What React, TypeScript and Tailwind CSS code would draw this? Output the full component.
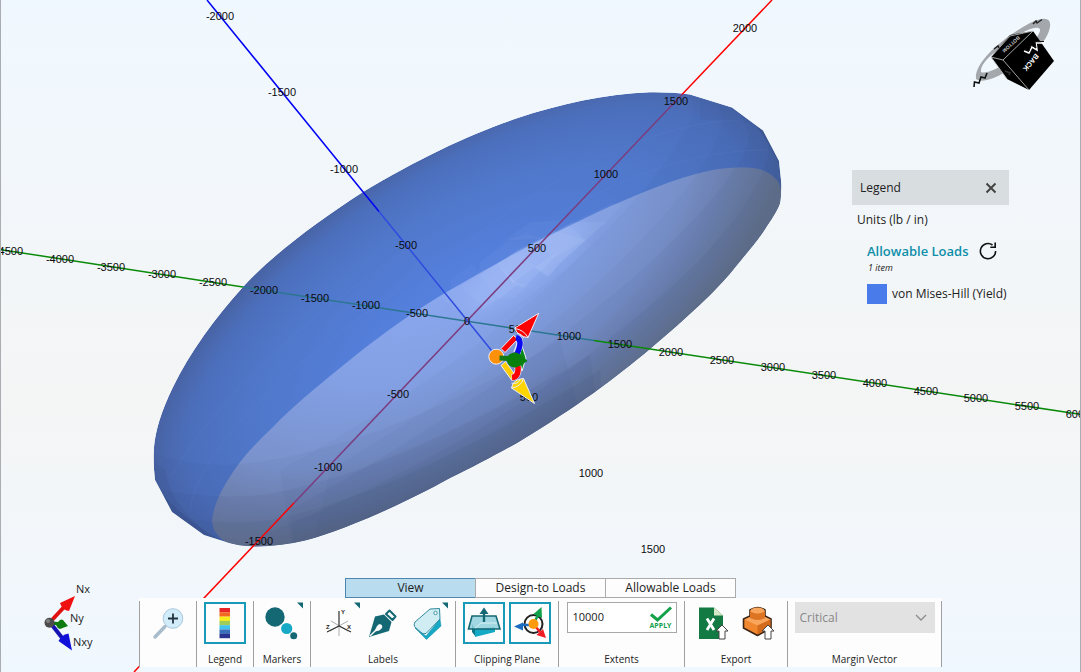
import React, { useState } from "react";

type Point = [number, number];

type Axis = {
  id: string;
  step: Point;
  from: number;
  to: number;
};

const ORIGIN: Point = [467.4, 320.8];

// screen distance covered by 500 units on each axis
const AXES: Axis[] = [
  { id: "nx", step: [69.5, -73.3], from: -3, to: 4 },
  { id: "ny", step: [50.9, 7.75], from: -9, to: 12 },
  { id: "nxy", step: [61.8, 76.15], from: -4, to: 3 },
];

const OUTLINE =
  "M154 447 Q153 464 155 480 L172 512 L204 535 L226 542 Q238 546 256 546.500 Q282 546 305 540.500 C345 530 405 503 450 478 C475 466 495 455 517 443 C580 405 615 378 650 349 C690 315 715 292 733 270 C750 249 760 238 767 226 Q778 210 780 203 Q782 190 781 180 L779 161 L763 130.500 L732 107.500 L690 94.500 Q672 92 650 92.300 C605 94 560 104 517 118.300 C470 134 420 158 363 192 C315 223 270 257 243 287 C215 318 190 352 173 387 Q156 422 154 447 Z";

const SECTION =
  "M781 206 Q783 185 776 179 C766 169 754 167 743 167.500 C722 167 705 171 683 177.700 C645 190 605 208 567 227 C527 246 488 268 450 290 C410 313 370 343 340 368 C315 388 290 409 273 427 C255 444 243 457 233 472 Q213 501 212 522 Q213 534 226 542 L260 560 L800 560 L800 206 Z";

const COLOR_SCALE = ["#e8262a", "#f26a21", "#f7ec1c", "#9fcb5a", "#3fc3ee", "#3a6fb9", "#28348f"];

const FACETS = [
  ["M452 289 L460 286 L482 308 L468 318 L440 297Z", 0.08],
  ["M460 286 L479 275 L500 298 L483 309Z", 0.12],
  ["M479 275 L497 264 L518 284 L500 299Z", 0.18],
  ["M497 264 L518 250 L535 267 L513 283Z", 0.24],
  ["M513 283 L535 267 L560 250 L546 266 L523 288Z", 0.15],
  ["M518 250 L555 231 L586 240 L560 263 L548 277 L535 267Z", 0.2],
  ["M540 240 L568 226 L586 240 L552 259Z", 0.1],
  ["M555 231 L573 222 L606 222 L586 240Z", 0.13],
  ["M573 222 L612 203 L622 205 L606 222Z", 0.05],
  ["M500 299 L518 284 L530 284 L514 298Z", 0.08],
  ["M480 262 L510 239 L528 234 L541 238 L500 262 L478 274Z", 0.05],
  ["M505 240 L530 222 L565 220 L554 231 L540 239Z", 0.05],
  ["M452 278 L472 264 L480 273 L450 290Z", 0.04],
] as const;

const Ticks = () => (
  <g fill="#0b0b10" fontSize="11" textAnchor="middle" fontFamily="'Liberation Sans', Arial, sans-serif">
    {AXES.map((axis) =>
      Array.from({ length: axis.to - axis.from + 1 }, (_, i) => axis.from + i)
        .filter((n) => n !== 0 || axis.id === "nx")
        .map((n) => (
          <text
            key={axis.id + n}
            x={Math.round(ORIGIN[0] + n * axis.step[0])}
            y={Math.round(ORIGIN[1] + n * axis.step[1]) + 4}
          >
            {n * 500}
          </text>
        ))
    )}
  </g>
);

const Gizmo = () => (
  <g stroke="#e9eefb" strokeWidth="1" strokeLinejoin="round">
    <path d="M522 346 L526 358 L522 371 L518 360Z" fill="#0a8a1c" />
    <path d="M501 348.500 L513.500 335.500 L518 339 L505 352.500Z" fill="#f00" />
    <path d="M514.700 328 L538.700 313.300 L528 337.500 Q518 337 514.700 328Z" fill="#f00" />
    <path d="M515 328.500 Q524 330 528 337.500 M517 333 Q522 334 524 338" fill="none" />
    <path d="M516.500 338.500 Q523 339 516.500 353" fill="none" strokeWidth="7" />
    <path d="M516 337.500 Q523.500 339 517 354" fill="none" stroke="#0a0af0" strokeWidth="5.500" />
    <path d="M501 365.500 L505.500 361.500 L516 376 L511.500 380Z" fill="#fc0" />
    <path d="M518 366 Q519 377 511.500 377.500" fill="none" strokeWidth="7" />
    <path d="M518 366 Q519 377 512 377.500" fill="none" stroke="#f00" strokeWidth="5.500" />
    <path d="M511.500 388 Q513 379 523.500 378.500 L534.500 403.500Z" fill="#ffd500" />
    <path d="M511.500 388 Q521 387 523.500 378.500 M511.500 383 Q518 385 520 379" fill="none" />
    <circle cx="496.300" cy="356.700" r="7.500" fill="#ff900a" />
    <path d="M499.500 355.500 L509 356 L509 361 L499.500 360.500Z" fill="#127a14" stroke="none" />
    <path d="M516 352.500 Q521 354 527.500 361 Q520 366 516 367.500 Q507 367 507 360 Q507 353 516 352.500Z" fill="#0a800c" stroke="none" />
  </g>
);

const Scene = () => (
  <svg
    className="absolute inset-0 h-full w-full"
    viewBox="1 0 1079 672"
    preserveAspectRatio="xMidYMid slice"
    role="img"
    aria-label="Failure envelope"
  >
    <defs>
      <radialGradient id="shell" gradientUnits="userSpaceOnUse" cx="0" cy="0" r="1" gradientTransform="translate(467 320) rotate(-32.7) scale(360 168)">
        <stop offset="0" stopColor="#5683e2" />
        <stop offset="0.3" stopColor="#547fdb" />
        <stop offset="0.65" stopColor="#5078cb" />
        <stop offset="0.88" stopColor="#4c6fbc" />
        <stop offset="1" stopColor="#4863a4" />
      </radialGradient>
      <radialGradient id="section" gradientUnits="userSpaceOnUse" cx="0" cy="0" r="1" gradientTransform="translate(447 276) rotate(-34) scale(400 190)">
        <stop offset="0" stopColor="#8ca8f0" />
        <stop offset="0.4" stopColor="#83a0e4" />
        <stop offset="0.7" stopColor="#7a92cc" />
        <stop offset="0.9" stopColor="#6c7ca4" />
        <stop offset="1" stopColor="#68758f" />
      </radialGradient>
      <clipPath id="body">
        <path d={OUTLINE} />
      </clipPath>
      <clipPath id="front">
        <path d={SECTION} />
      </clipPath>
      <filter id="soft">
        <feGaussianBlur stdDeviation="9" />
      </filter>
    </defs>

    <g clipPath="url(#body)">
      <path d={OUTLINE} fill="url(#shell)" />
      <path d={SECTION} fill="url(#section)" />
      {/* glow behind the section plane */}
      <g clipPath="url(#front)">
        <ellipse cx="522" cy="268" rx="75" ry="22" fill="#a5c0ff" opacity="0.35" filter="url(#soft)" transform="rotate(-36 522 268)" />
      </g>
      {FACETS.map(([d, opacity]) => (
        <path key={d} d={d} fill="#c3d5ff" opacity={opacity} />
      ))}
      {/* darker bands towards both tips */}
      <g fill="#26355e">
        <path d="M680 85 Q700 105 690 122 C670 165 620 220 555 280 C500 330 410 400 280 470 L300 600 L800 600 L800 80Z" opacity="0.03" />
        <path d="M706 90 Q727 112 720 130 C712 165 655 230 590 290 C530 345 430 410 330 470 L300 600 L800 600 L800 80Z" opacity="0.03" />
        <path d="M728 100 Q752 125 748 143 C735 185 655 262 600 305 C520 368 420 440 290 510 L300 600 L800 600 L800 80Z" opacity="0.04" />
        <path d="M750 108 Q773 140 768 158 C750 215 690 275 620 330 C540 395 420 475 260 535 L300 600 L800 600 L800 80Z" opacity="0.05" />
        <path d="M700 120 Q750 118 790 135 L790 80 L732 90 L700 95Z" opacity="0.04" />
        <path d="M715 98 Q755 112 790 165 L790 80 L732 90Z" opacity="0.14" />
        <path d="M732 100 Q765 130 782 170 L790 80Z" opacity="0.2" />
        <path d="M140 448 Q195 472 260 462 Q400 440 560 340 L620 560 L140 560Z" opacity="0.04" />
        <path d="M140 485 Q210 502 270 494 Q400 470 590 355 L620 560 L140 560Z" opacity="0.06" />
        <path d="M140 508 Q210 528 270 520 Q400 495 600 370 L620 560 L140 560Z" opacity="0.06" />
        <path d="M165 470 Q172 520 250 560 L140 560 L140 450Z" opacity="0.08" />
        <path d="M150 480 Q185 525 240 550 L140 560Z" opacity="0.14" />
      </g>
      <g fill="none" stroke="#8fb0ff" strokeOpacity="0.08">
        <path d="M170 478 C215 400 310 310 430 235" />
        <path d="M190 510 C200 440 310 350 400 290" />
        <path d="M500 250 C570 205 660 150 768 150" />
        <path d="M470 240 C560 170 660 120 745 120" />
      </g>
    </g>

    <g fill="none" strokeWidth="1.500">
      <path d="M0 249.500 L243 287" stroke="#098a09" />
      <path d="M243 287 L594 340.500" stroke="#2b7690" />
      <path d="M594 340.500 L1081 414.500" stroke="#098a09" />
      <path d="M772 0 L682 94.500" stroke="#f00" />
      <path d="M682 94.500 L294 503" stroke="#7b3c7e" />
      <path d="M294 503 L134 672" stroke="#f00" />
      <path d="M207 0 L379 211.500" stroke="#0000f5" />
      <path d="M379 211.500 L496 356" stroke="#2f4be0" />
    </g>
    <Ticks />
    <Gizmo />
  </svg>
);

const ViewCube = () => (
  <svg className="h-20 w-22" viewBox="970 14 88 80" role="img" aria-label="View cube">
    <path
      fillRule="evenodd"
      fill="#a4a8ac"
      d="M976 79 C974 62 1004 37 1030 23 Q1052 13 1050 27 C1048 38 1040 47 1030 53 C1012 70 986 86 976 79Z M981 72 C985 75 1005 66 1018 55 C1032 45 1041 34 1040 29 C1034 23 1010 39 995 52 Q980 64 981 72Z"
    />
    <path d="M991 57 L1010 35 L1033 31 L1054 61 L1029 90 L1007 79Z" fill="#000" />
    <path d="M1007 79 L991 57 L1010 36 L1033 31 M991 57 L1003 60 L1033 31 M1003 60 L1029 90" fill="none" stroke="#c9c9c9" strokeWidth="0.800" />
    <g fontWeight="700" textAnchor="middle" fontFamily="'Liberation Sans', sans-serif">
      <text transform="translate(1010 43) rotate(138)" fontSize="5" fill="#c4c4c4">
        BOTTOM
      </text>
      <text transform="translate(1029 61) rotate(130)" fontSize="7" fill="#fff">
        BACK
      </text>
    </g>
    <path d="M1024 51 L1029 53 L1032 47 L1037 50 L1036 43 L1044 43" fill="none" stroke="#fff" strokeWidth="1.600" />
    <path d="M1025 49.500 L1029 51 L1031 45 L1036 48 L1035 41.500 L1044 41.500" fill="none" stroke="#111" strokeWidth="1" />
    <path d="M974 87 L974.500 82 L979 83 L981 77 L985 78 L987 73" fill="none" stroke="#111" strokeWidth="1.600" />
    <path d="M1033 24 L1036 21 L1037 23 L1042 19.500" fill="none" stroke="#222" strokeWidth="1.500" />
    <path d="M994 49 L998 46 L999 48" fill="none" stroke="#222" strokeWidth="1.500" />
    <path d="M1005 71 L1010 73 L1009 75" fill="none" stroke="#333" strokeWidth="1.500" />
  </svg>
);

const Triad = () => (
  <svg className="absolute bottom-4 left-10 h-20 w-16" viewBox="41 576 64 80" role="img" aria-label="Axis directions">
    <g strokeWidth="4">
      <path d="M52 620 L65 606" stroke="#e01010" />
      <path d="M52 625 L63 639" stroke="#1414b4" />
    </g>
    <path d="M60 603 L75 596 L69 611Q62 610 60 603Z" fill="#f01010" />
    <path d="M58.500 641 Q61 635 68.500 633.500 L72 650.500Z" fill="#1010d8" />
    <path d="M52 621.500 L58 622 Q61 618.500 63 620 L68 626 L60 629 Q57 628 56 625 L52 625Z" fill="#0d7a10" />
    <circle cx="49.500" cy="622.700" r="5" fill="#4c4c4c" />
    <circle cx="48" cy="621" r="2" fill="#808080" />
    <g fontSize="11" fill="#222" fontFamily="'Open Sans', 'Noto Sans', sans-serif">
      <text x="76" y="593">Nx</text>
      <text x="70" y="622">Ny</text>
      <text x="73" y="646">Nxy</text>
    </g>
  </svg>
);

const LegendPanel = ({ onClose }: { onClose: () => void }) => (
  <aside className="mr-[71px] w-[157px] self-end text-xs text-[#222]">
    <div className="flex h-[35px] items-center justify-between bg-[#d8dde0] pr-3 pl-2">
      <h2>Legend</h2>
      <button type="button" aria-label="Close legend" onClick={onClose}>
        <svg className="size-3" viewBox="0 0 12 12" stroke="#444" strokeWidth="2">
          <path d="M1.500 1.500 L10.500 10.500 M10.500 1.500 L1.500 10.500" />
        </svg>
      </button>
    </div>
    <p className="mt-[7px] pl-[5px] leading-4">Units (lb / in)</p>
    <div className="mt-[13px] flex items-center pl-[15px]">
      <h3 className="text-[13px] leading-5 font-semibold text-[#0d8fa9]">Allowable Loads</h3>
      <button type="button" aria-label="Refresh" className="ml-[10px]">
        <svg className="size-5" viewBox="0 0 20 20" fill="none" stroke="#111" strokeWidth="1.600">
          <path d="M17.600 10 A7.600 7.600 0 1 1 14.500 4" />
          <path d="M17.200 1.500 V6.300 H12.300" />
        </svg>
      </button>
    </div>
    <p className="pl-4 text-[9px] leading-[14px] italic">1 item</p>
    <div className="mt-[9px] flex items-center gap-[5px] pl-[15px]">
      <span className="size-5 shrink-0 bg-[#4a7bea]" />
      <span className="text-xs whitespace-nowrap">von Mises-Hill (Yield)</span>
    </div>
  </aside>
);

const Tab = ({ label, active, onClick }: { label: string; active: boolean; onClick: () => void }) => (
  <button
    type="button"
    role="tab"
    aria-selected={active}
    onClick={onClick}
    className={
      active
        ? "h-5 w-[131px] border border-[#4f86ad] bg-[#b9dcef] text-xs leading-[18px]"
        : "-ml-px h-5 w-[131px] border border-[#aaa] bg-[#fdfdfd] text-xs leading-[18px]"
    }
  >
    {label}
  </button>
);

type ToolProps = {
  label: string;
  selected?: boolean;
  menu?: boolean;
  children: React.ReactNode;
};

const Tool = ({ label, selected, menu, children }: ToolProps) => (
  <button
    type="button"
    aria-label={label}
    aria-pressed={selected}
    className="size-[42px] shrink-0"
  >
    <svg className="size-[42px]" viewBox="0 0 42 42" fill="none">
      {selected && <rect x="1" y="1" width="40" height="40" stroke="#189ab8" strokeWidth="2" />}
      {children}
      {menu && <path d="M36 0.500 H42 V6.500Z" fill="#136874" />}
    </svg>
  </button>
);

const Group = ({ label, htmlFor, className, children }: { label: string; htmlFor?: string; className: string; children: React.ReactNode }) => (
  <div className={"flex flex-col items-center border-l border-[#a0a0a0] pt-px " + className}>
    <div className="flex h-[42px] items-start justify-center">{children}</div>
    {htmlFor ? (
      <label htmlFor={htmlFor} className="mt-[7px] text-[10px] leading-4">{label}</label>
    ) : (
      <span className="mt-[7px] h-4 text-[10px] leading-4">{label}</span>
    )}
  </div>
);

const UploadArrow = () => (
  <path d="M29 24 L35 30 H32 V38 H26 V30 H23Z" fill="#fff" stroke="#444" strokeWidth="1" />
);

const Toolbar = () => {
  const [extents, setExtents] = useState("10000");

  return (
    <div className="flex bg-[#fdfdfd] pt-[3px]">
      <Group label="" className="w-[57px]">
        <Tool label="Zoom to fit">
          <path d="M18 24.500 L8 35" stroke="#a9bccb" strokeWidth="3.500" strokeLinecap="round" />
          <circle cx="26" cy="16.500" r="9.800" fill="#d3ecfa" stroke="#a9c8dd" />
          <path d="M21 16.500 H31 M26 11.500 V21.500" stroke="#23343f" strokeWidth="1.800" />
        </Tool>
      </Group>

      <Group label="Legend" className="w-[57px]">
        <Tool label="Legend" selected>
          {COLOR_SCALE.map((color, i) => (
            <rect key={color} x="15.500" y={6 + i * 4.3} width="10.500" height="4.400" fill={color} />
          ))}
        </Tool>
      </Group>

      <Group label="Markers" className="w-[57px]">
        <Tool label="Markers" menu>
          <circle cx="14" cy="15" r="9.700" fill="#136874" />
          <circle cx="25.700" cy="26.500" r="5.600" fill="#16a9c6" />
          <circle cx="32.700" cy="33.700" r="3.500" fill="#136874" />
        </Tool>
      </Group>

      <Group label="Labels" className="w-[145px]">
        <div className="flex gap-0.5">
          <Tool label="Axis labels" menu>
            <path d="M13 19 L30 29 M30 19 L12 29 M21 24 V34" stroke="#999" strokeWidth="0.800" />
            <path d="M21 24 V9 M21 24 L9 30 M21 24 L33 30" stroke="#333" strokeWidth="1.200" />
            <g fontSize="6" fontWeight="700" fill="#222" fontFamily="'Liberation Sans', sans-serif">
              <text x="23" y="12">Y</text>
              <text x="8" y="27">Z</text>
              <text x="29" y="27">X</text>
            </g>
          </Tool>
          <Tool label="Annotate">
            <path d="M7 35 L13 14.500 L22 12.500 L29.500 20 L27 29Z" fill="#136874" />
            <path d="M8 34 L17 25" stroke="#fdfdfd" strokeWidth="1.500" />
            <path d="M13 29.500 Q14 23 18 22 Q21 23 20 26 Q18 29 13 29.500Z" fill="#fdfdfd" />
            <path d="M24 12 L27.500 8.500 L33.500 14.500 L30.500 18Z" fill="#fdfdfd" stroke="#136874" strokeWidth="2" strokeLinejoin="round" />
          </Tool>
          <Tool label="Tags" menu>
            <path d="M9 26 L20 34 L34 17 L35 24 L20.500 37.500Z" fill="#16a9c6" stroke="#128aa5" strokeWidth="0.500" />
            <path d="M9 20 L24 7 L33.500 6.500 L34 17 L20 31.500 Q17 33 14 29.500 L8.500 24.500 Q7.500 22 9 20Z" fill="#d0edf4" stroke="#1c7f92" strokeWidth="0.900" />
            <circle cx="29.500" cy="11" r="1.700" fill="#fff" stroke="#1c7f92" strokeWidth="0.800" />
          </Tool>
        </div>
      </Group>

      <Group label="Clipping Plane" className="w-[103px]">
        <div className="flex gap-1">
          <Tool label="Clipping plane" selected>
            <path d="M9 22 V30 L12 34 V27Z" fill="#0d7687" />
            <path d="M12 27 L32 25 V30 L12 35Z" fill="#16a9c6" />
            <path d="M9 14 H33 L37 27 H5.500Z" fill="#8fd0dc" fillOpacity="0.850" stroke="#136874" strokeWidth="1.600" />
            <path d="M12 26 L18 21 H34" stroke="#d6f1f6" strokeWidth="1" />
            <path d="M21 20 V10" stroke="#136874" strokeWidth="2.400" />
            <path d="M21 5.500 L25.500 12 H16.500Z" fill="#136874" />
          </Tool>
          <Tool label="Plane gizmo" selected>
            <circle cx="24.500" cy="22" r="9" stroke="#222" strokeWidth="2" />
            <path d="M24 23 H14" stroke="#1c6cc2" strokeWidth="2.500" />
            <path d="M5 24.500 L14 20.500 V28.500Z" fill="#1c6cc2" />
            <path d="M24.500 22 L29 13" stroke="#12a04a" strokeWidth="2.500" />
            <path d="M32.500 5 L33 16 L24.500 12Z" fill="#12a04a" />
            <path d="M24.500 22 L31 30" stroke="#ef1c24" strokeWidth="2.500" />
            <path d="M37 36 L27.500 33 L34 27Z" fill="#ef1c24" />
            <circle cx="24.500" cy="22" r="5" fill="#ff9a0d" />
          </Tool>
        </div>
      </Group>

      <Group label="Extents" htmlFor="extents" className="w-[126px]">
        <div className="flex h-[31px] w-[110px] items-center justify-between border border-[#a8a8a8] bg-white pl-[5px]">
          <input
            id="extents"
            className="w-16 bg-transparent text-[11px] outline-none"
            value={extents}
            onChange={(e) => setExtents(e.target.value)}
          />
          <button type="button" className="flex w-[30px] flex-col items-center text-[7px] leading-[8px] font-bold text-[#12a04a]">
            <svg className="h-4 w-6" viewBox="0 0 24 16" fill="none" stroke="#12a04a" strokeWidth="3">
              <path d="M2 8.500 L8.500 14 L22 1.500" />
            </svg>
            APPLY
          </button>
        </div>
      </Group>

      <Group label="Export" className="w-[103px]">
        <div className="flex gap-0.5">
          <Tool label="Export to Excel">
            <path d="M6 5.500 H21 L30 13.500 V37 H6Z" fill="#127a42" />
            <path d="M21 5.500 L30 13.500 H21Z" fill="#d5e8c8" />
            <path d="M14 16.500 L21 28 M21 16.500 L14 28" stroke="#fff" strokeWidth="2.800" />
            <g transform="translate(0 -1)">
              <UploadArrow />
            </g>
          </Tool>
          <Tool label="Export model">
            <path d="M6.500 17 L13 14 V8 Q20.500 3 28 8 V14 L34 17 V26 L20.500 33.500 L6.500 26Z" fill="#f0862e" stroke="#3b2414" strokeWidth="1.600" strokeLinejoin="round" />
            <path d="M7.500 17.500 L13 15 H28 L33.500 17.500 L20.500 23.500Z" fill="#f9a55c" />
            <path d="M20.500 23.500 L33.500 17.500 V25.500 L20.500 32.500Z" fill="#d36a1c" />
            <path d="M13 16 V8.500 Q20.500 12.500 28 8.500 V16 Q20.500 20 13 16Z" fill="#dd7423" />
            <ellipse cx="20.500" cy="8.500" rx="7" ry="3" fill="#f9a55c" />
            <g transform="translate(2 -1)">
              <UploadArrow />
            </g>
          </Tool>
        </div>
      </Group>

      <Group label="Margin Vector" htmlFor="margin-vector" className="w-[155px] border-r">
        <div className="relative">
          <select
            id="margin-vector"
            disabled
            className="h-[31px] w-[140px] appearance-none bg-[#e2e2e2] pl-[5px] text-xs text-[#888] opacity-100"
          >
            <option>Critical</option>
          </select>
          <svg className="pointer-events-none absolute top-3 right-2 h-2 w-3" viewBox="0 0 12 8" fill="none" stroke="#8a8a8a" strokeWidth="1.300">
            <path d="M1 1 L6 6 L11 1" />
          </svg>
        </div>
      </Group>
    </div>
  );
};

const TABS = ["View", "Design-to Loads", "Allowable Loads"];

const App = () => {
  const [tab, setTab] = useState("View");
  const [showLegend, setShowLegend] = useState(true);

  return (
    <main className="relative flex min-h-screen flex-col border-x border-[#a9adb1] bg-linear-to-b from-[#f0f8ff] via-[#f4f5f5] via-60% to-[#f0f8ff] font-['Open_Sans','Noto_Sans',sans-serif] text-[#222]">
      <Scene />
      <Triad />

      <div className="relative flex flex-1 flex-col">
        <div className="mt-[14px] mr-[22px] mb-[76px] self-end">
          <ViewCube />
        </div>
        {showLegend && <LegendPanel onClose={() => setShowLegend(false)} />}
      </div>

      <div className="relative mb-[5px] flex flex-col items-center">
        <div role="tablist" className="flex">
          {TABS.map((name) => (
            <Tab key={name} label={name} active={name === tab} onClick={() => setTab(name)} />
          ))}
        </div>
        <Toolbar />
      </div>
    </main>
  );
};

export default App;
